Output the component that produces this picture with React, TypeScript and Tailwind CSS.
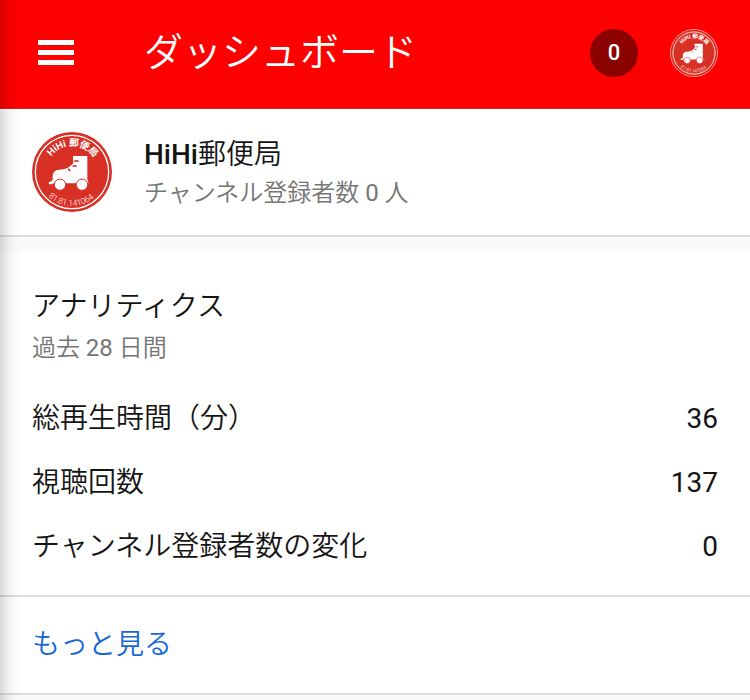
import React from "react";

interface Stat {
  label: string;
  value: number;
}

const stats: Stat[] = [
  { label: "総再生時間（分）", value: 36 },
  { label: "視聴回数", value: 137 },
  { label: "チャンネル登録者数の変化", value: 0 },
];

interface ChannelLogoProps {
  id: string;
  className?: string;
}

const ChannelLogo: React.FC<ChannelLogoProps> = ({ id, className }) => {
  return (
    <svg viewBox="0 0 240 240" className={className} aria-hidden="true">
      <defs>
        <path id={`${id}-top`} d="M 42 120 A 78 78 0 0 1 198 120" />
        <path id={`${id}-bottom`} d="M 18 120 A 102 102 0 0 0 222 120" />
      </defs>
      <circle cx="120" cy="120" r="120" fill="#d93025" />
      <circle cx="120" cy="120" r="110" fill="none" stroke="#fff" strokeWidth="4" />
      <text fill="#fff" fontSize="29" fontWeight="700" textAnchor="middle">
        <textPath href={`#${id}-top`} startOffset="51%">
          HiHi 郵便局
        </textPath>
      </text>
      <text fill="#fff" fontSize="25" fontWeight="300" textAnchor="middle">
        <textPath href={`#${id}-bottom`} startOffset="49%">
          81.81.141064
        </textPath>
      </text>
      {/* Roller skate */}
      <path
        d="M123 72 H166 V142 L170 154 H62 V130 Q64 115 80 113 L94 112 Q106 110 114 103 L124 94 Z"
        fill="#fff"
      />
      <path d="M127 87 H140 M122 102 H134 M108 110 L115 117" stroke="#c5221f" strokeWidth="4" />
      <path d="M66 145 Q62 153 54 153" fill="none" stroke="#fff" strokeWidth="8" strokeLinecap="round" />
      <circle cx="84" cy="158" r="17" fill="#fff" stroke="#d93025" strokeWidth="3" />
      <circle cx="150" cy="158" r="17" fill="#fff" stroke="#d93025" strokeWidth="3" />
    </svg>
  );
};

const Header: React.FC = () => {
  return (
    <header className="flex h-[109px] items-center border-b border-[#c62828] bg-[#ff0000] px-8 pb-0.5 text-white">
      <button type="button" aria-label="メニュー" className="w-12 shrink-0 px-1.5">
        <svg viewBox="0 0 36 26" className="h-[26px] w-9" fill="currentColor">
          <path d="M0 0h36v5H0zM0 10h36v5H0zM0 20h36v5H0z" />
        </svg>
      </button>
      <h1 className="ml-16 flex-1 text-[39px] leading-[48px]">ダッシュボード</h1>
      <div className="flex items-center gap-8">
        <button
          type="button"
          className="h-12 w-12 rounded-full bg-[#8b0000] text-[22px] leading-6 font-medium"
        >
          0
        </button>
        <button type="button" aria-label="アカウント" className="h-12 w-12 rounded-full border border-white/60">
          <ChannelLogo id="account" className="h-full w-full" />
        </button>
      </div>
    </header>
  );
};

const ChannelSummary: React.FC = () => {
  return (
    <section className="flex items-center gap-8 border-b-2 border-[#dedede] px-8 py-[23px]">
      <ChannelLogo id="channel" className="h-20 w-20 shrink-0" />
      <div className="pt-0.5">
        <h2 className="text-[28px] leading-10">
          <span className="font-medium">HiHi</span>郵便局
        </h2>
        <p className="text-2xl leading-9 text-[#757575]">
          チャンネル登録者数 <span className="font-normal">0</span> 人
        </p>
      </div>
    </section>
  );
};

const Analytics: React.FC = () => {
  return (
    <section>
      <div className="px-8 pt-9 pb-4">
        <h2 className="text-[28px] leading-10">アナリティクス</h2>
        <p className="text-2xl leading-[42px] text-[#757575]">
          過去 <span className="font-normal">28</span> 日間
        </p>
        <dl className="mt-[18px]">
          {stats.map((stat) => (
            <div key={stat.label} className="flex h-16 items-center justify-between text-[28px] leading-10">
              <dt>{stat.label}</dt>
              <dd className="font-normal">{stat.value}</dd>
            </div>
          ))}
        </dl>
      </div>
      <div className="border-y-2 border-[#dedede] px-8 py-7">
        <a href="#analytics" className="block text-[28px] leading-10 text-[#1967d2]">
          もっと見る
        </a>
      </div>
    </section>
  );
};

const App: React.FC = () => {
  return (
    <div className="relative min-h-screen bg-[#f8f9f9] font-[Roboto,'Noto_Sans_CJK_JP',sans-serif] font-[350] text-[#141414]">
      <Header />
      <main>
        <div className="bg-white">
          <ChannelSummary />
        </div>
        <div className="mt-3.5 bg-white">
          <Analytics />
        </div>
      </main>
      {/* Shade along the left edge */}
      <div className="pointer-events-none absolute inset-y-0 left-0 w-5 bg-linear-to-r from-black/15 via-black/4 to-transparent" />
    </div>
  );
};

export default App;
